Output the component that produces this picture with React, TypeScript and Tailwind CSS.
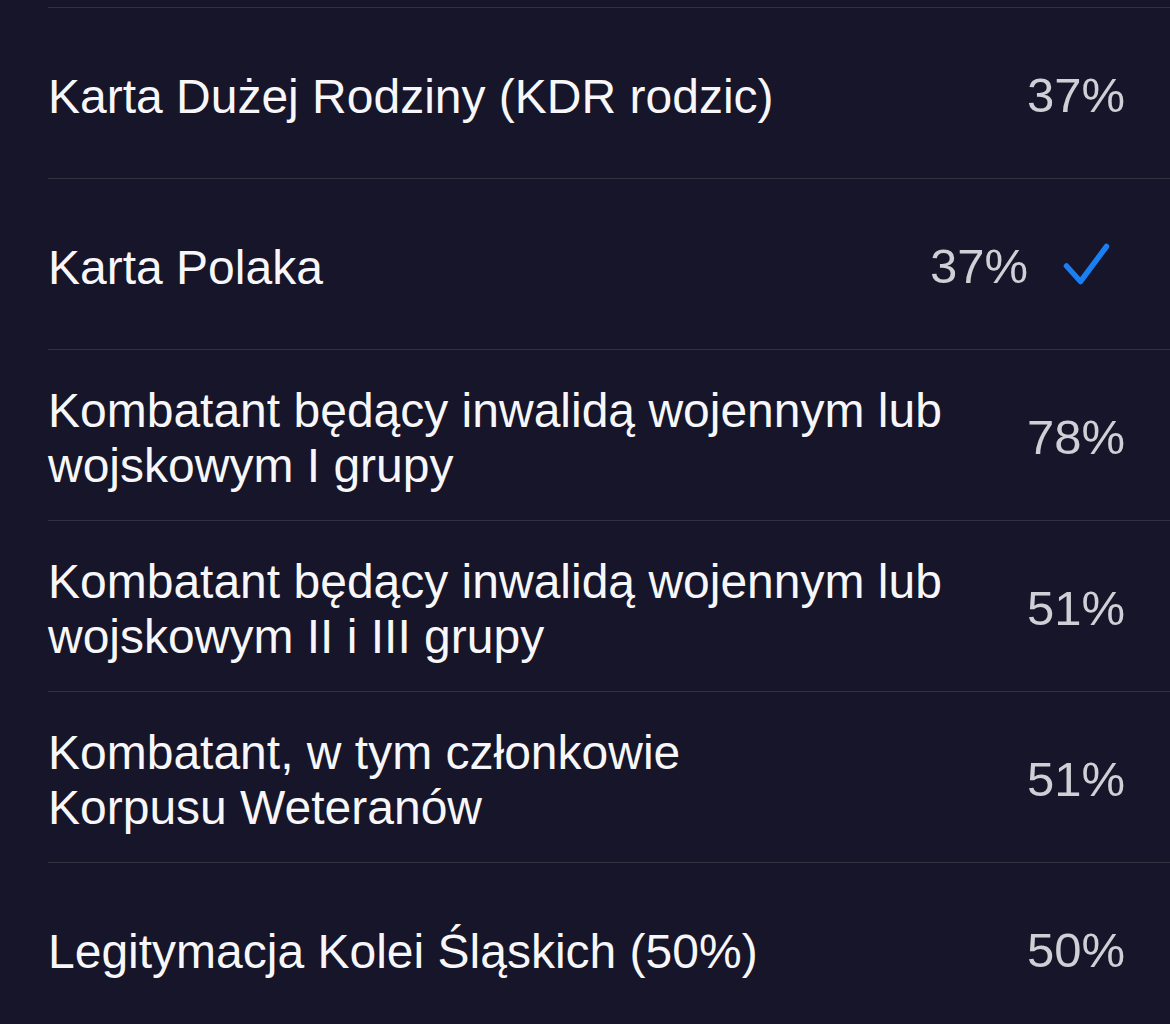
import React from "react";

interface Row {
  lines: string[];
  value: string;
  checked?: boolean;
}

const rows: Row[] = [
  { lines: ["Karta Dużej Rodziny (KDR rodzic)"], value: "37%" },
  { lines: ["Karta Polaka"], value: "37%", checked: true },
  { lines: ["Kombatant będący inwalidą wojennym lub", "wojskowym I grupy"], value: "78%" },
  { lines: ["Kombatant będący inwalidą wojennym lub", "wojskowym II i III grupy"], value: "51%" },
  { lines: ["Kombatant, w tym członkowie", "Korpusu Weteranów"], value: "51%" },
  { lines: ["Legitymacja Kolei Śląskich (50%)"], value: "50%" },
];

const CheckIcon = () => (
  <svg width="48" height="48" viewBox="0 0 48 48" fill="none" className="ml-[34px] mr-[15px] -mt-[6px] shrink-0">
    <path
      d="M4.5 26 L18.5 41.5 L44.5 6.5"
      stroke="#1a7ff2"
      strokeWidth="5.5"
      strokeLinecap="round"
      strokeLinejoin="round"
    />
  </svg>
);

export default function App() {
  return (
    <div
      className="min-h-screen w-full bg-[#16152a] pt-[7px] antialiased"
      style={{ fontFamily: '"Liberation Sans", Arial, sans-serif' }}
    >
      {rows.map((row, i) => (
        <div
          key={i}
          className="ml-[48px] flex h-[171px] items-center border-t border-[#32313f] pt-[6px] pr-[45px]"
        >
          <div className="flex-1 text-[48px] leading-[55px] text-[#f7f7f9]">
            {row.lines.map((line, j) => (
              <div key={j} className="whitespace-nowrap">
                {line}
              </div>
            ))}
          </div>
          <div className="flex items-center">
            <span className="text-[49px] text-[#cfcfd6]">{row.value}</span>
            {row.checked && <CheckIcon />}
          </div>
        </div>
      ))}
    </div>
  );
}
